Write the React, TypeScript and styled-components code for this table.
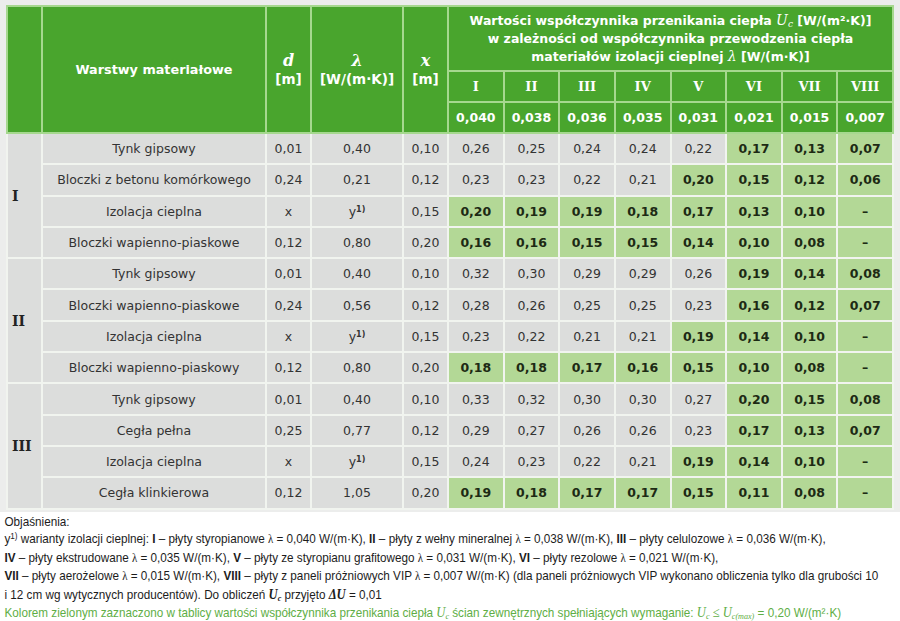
import styled, { createGlobalStyle } from "styled-components";

const GlobalStyle = createGlobalStyle`
  body {
    margin: 0;
    background: #ffffff;
    overflow: hidden;
  }
`;

type Row = {
  name: string;
  d: string;
  lambda: string;
  x: string;
  values: string[];
  greenFrom: number;
};

type Group = { label: string; rows: Row[] };

const ROMAN = ["I", "II", "III", "IV", "V", "VI", "VII", "VIII"];
const LAMBDAS = ["0,040", "0,038", "0,036", "0,035", "0,031", "0,021", "0,015", "0,007"];

const GROUPS: Group[] = [
  {
    label: "I",
    rows: [
      { name: "Tynk gipsowy", d: "0,01", lambda: "0,40", x: "0,10", values: ["0,26", "0,25", "0,24", "0,24", "0,22", "0,17", "0,13", "0,07"], greenFrom: 5 },
      { name: "Bloczki z betonu komórkowego", d: "0,24", lambda: "0,21", x: "0,12", values: ["0,23", "0,23", "0,22", "0,21", "0,20", "0,15", "0,12", "0,06"], greenFrom: 4 },
      { name: "Izolacja cieplna", d: "x", lambda: "y", x: "0,15", values: ["0,20", "0,19", "0,19", "0,18", "0,17", "0,13", "0,10", "–"], greenFrom: 0 },
      { name: "Bloczki wapienno-piaskowe", d: "0,12", lambda: "0,80", x: "0,20", values: ["0,16", "0,16", "0,15", "0,15", "0,14", "0,10", "0,08", "–"], greenFrom: 0 },
    ],
  },
  {
    label: "II",
    rows: [
      { name: "Tynk gipsowy", d: "0,01", lambda: "0,40", x: "0,10", values: ["0,32", "0,30", "0,29", "0,29", "0,26", "0,19", "0,14", "0,08"], greenFrom: 5 },
      { name: "Bloczki wapienno-piaskowe", d: "0,24", lambda: "0,56", x: "0,12", values: ["0,28", "0,26", "0,25", "0,25", "0,23", "0,16", "0,12", "0,07"], greenFrom: 5 },
      { name: "Izolacja cieplna", d: "x", lambda: "y", x: "0,15", values: ["0,23", "0,22", "0,21", "0,21", "0,19", "0,14", "0,10", "–"], greenFrom: 4 },
      { name: "Bloczki wapienno-piaskowy", d: "0,12", lambda: "0,80", x: "0,20", values: ["0,18", "0,18", "0,17", "0,16", "0,15", "0,10", "0,08", "–"], greenFrom: 0 },
    ],
  },
  {
    label: "III",
    rows: [
      { name: "Tynk gipsowy", d: "0,01", lambda: "0,40", x: "0,10", values: ["0,33", "0,32", "0,30", "0,30", "0,27", "0,20", "0,15", "0,08"], greenFrom: 5 },
      { name: "Cegła pełna", d: "0,25", lambda: "0,77", x: "0,12", values: ["0,29", "0,27", "0,26", "0,26", "0,23", "0,17", "0,13", "0,07"], greenFrom: 5 },
      { name: "Izolacja cieplna", d: "x", lambda: "y", x: "0,15", values: ["0,24", "0,23", "0,22", "0,21", "0,19", "0,14", "0,10", "–"], greenFrom: 4 },
      { name: "Cegła klinkierowa", d: "0,12", lambda: "1,05", x: "0,20", values: ["0,19", "0,18", "0,17", "0,17", "0,15", "0,11", "0,08", "–"], greenFrom: 0 },
    ],
  },
];

const App = () => {
  return (
    <>
      <GlobalStyle />
      <TableWrap>
        <Table>
          <colgroup>
            <col style={{ width: 35 }} />
            <col style={{ width: 224 }} />
            <col style={{ width: 45 }} />
            <col style={{ width: 92 }} />
            <col style={{ width: 45 }} />
            {ROMAN.map((r) => (
              <col key={r} />
            ))}
          </colgroup>
          <thead>
            <TitleRow>
              <HeadCell rowSpan={3} />
              <HeadCell rowSpan={3} $size={12.8}>
                Warstwy materiałowe
              </HeadCell>
              <HeadCell rowSpan={3} $size={13.5}>
                <Symbol>d</Symbol>
                <br />[m]
              </HeadCell>
              <HeadCell rowSpan={3} $size={13.5}>
                <Symbol>λ</Symbol>
                <br />[W/(m·K)]
              </HeadCell>
              <HeadCell rowSpan={3} $size={13.5}>
                <Symbol>x</Symbol>
                <br />[m]
              </HeadCell>
              <HeadCell colSpan={8}>
                Wartości współczynnika przenikania ciepła <InlineSym>U<sub>c</sub></InlineSym> [W/(m²·K)]
                <br />w zależności od współczynnika przewodzenia ciepła
                <br />materiałów izolacji cieplnej <InlineSym>λ</InlineSym> [W/(m·K)]
              </HeadCell>
            </TitleRow>
            <SubRow>
              {ROMAN.map((r) => (
                <RomanCell key={r}>{r}</RomanCell>
              ))}
            </SubRow>
            <SubRow>
              {LAMBDAS.map((l) => (
                <HeadCell key={l}>{l}</HeadCell>
              ))}
            </SubRow>
          </thead>
          <tbody>
            {GROUPS.map((g) =>
              g.rows.map((row, i) => (
                <BodyRow key={g.label + i}>
                  {i === 0 && <GroupCell rowSpan={4}>{g.label}</GroupCell>}
                  <Cell>{row.name}</Cell>
                  <Cell>{row.d}</Cell>
                  <Cell>
                    {row.lambda === "y" ? (
                      <>
                        y<Sup>1)</Sup>
                      </>
                    ) : (
                      row.lambda
                    )}
                  </Cell>
                  <Cell>{row.x}</Cell>
                  {row.values.map((v, j) => (
                    <Cell key={j} $green={j >= row.greenFrom}>
                      {v}
                    </Cell>
                  ))}
                </BodyRow>
              ))
            )}
          </tbody>
        </Table>
      </TableWrap>
      <Notes>
        <NoteLine>Objaśnienia:</NoteLine>
        <NoteLine>
          y<sup>1)</sup> warianty izolacji cieplnej: <b>I</b> – płyty styropianowe <Greek>λ</Greek> = 0,040 W/(m·K), <b>II</b> – płyty z wełny mineralnej <Greek>λ</Greek> = 0,038 W/(m·K), <b>III</b> – płyty celulozowe <Greek>λ</Greek> = 0,036 W/(m·K),
        </NoteLine>
        <NoteLine>
          <b>IV</b> – płyty ekstrudowane <Greek>λ</Greek> = 0,035 W/(m·K), <b>V</b> – płyty ze styropianu grafitowego <Greek>λ</Greek> = 0,031 W/(m·K), <b>VI</b> – płyty rezolowe <Greek>λ</Greek> = 0,021 W/(m·K),
        </NoteLine>
        <NoteLine>
          <b>VII</b> – płyty aerożelowe <Greek>λ</Greek> = 0,015 W/(m·K), <b>VIII</b> – płyty z paneli próżniowych VIP <Greek>λ</Greek> = 0,007 W/(m·K) (dla paneli próżniowych VIP wykonano obliczenia tylko dla grubości 10
        </NoteLine>
        <NoteLine>
          i 12 cm wg wytycznych producentów). Do obliczeń <MathSym>U<sub>c</sub></MathSym> przyjęto <MathSym>ΔU</MathSym> = 0,01
        </NoteLine>
        <GreenLine>
          Kolorem zielonym zaznaczono w tablicy wartości współczynnika przenikania ciepła <Italic>U<sub>c</sub></Italic> ścian zewnętrznych spełniających wymaganie: <Italic>U<sub>c</sub> ≤ U<sub>c(max)</sub></Italic> = 0,20 W/(m²·K)
        </GreenLine>
      </Notes>
    </>
  );
};

export default App;

const TableWrap = styled.div`
  background: #ecedec;
  padding: 5px 6px 2px 6px;
`;

const Table = styled.table`
  width: 888px;
  table-layout: fixed;
  border-collapse: collapse;
  font-family: "DejaVu Sans", Verdana, sans-serif;
  font-size: 12.5px;
`;

const TitleRow = styled.tr`
  height: 65px;
`;

const SubRow = styled.tr`
  height: 31px;
`;

const HeadCell = styled.th<{ $size?: number }>`
  background: #49a52d;
  color: #ffffff;
  font-size: ${(p) => p.$size ?? 12.5}px;
  font-weight: bold;
  text-align: center;
  vertical-align: middle;
  border: 2px solid #a6d88f;
  line-height: 18px;
  padding: 0;
`;

const RomanCell = styled(HeadCell)`
  font-family: "DejaVu Serif", Georgia, serif;
  font-size: 13px;
`;

const Symbol = styled.span`
  font-family: "DejaVu Serif", Georgia, serif;
  font-style: italic;
  font-size: 16px;
`;

const InlineSym = styled.span`
  font-family: "DejaVu Serif", Georgia, serif;
  font-style: italic;
  font-weight: normal;
  font-size: 14px;
  line-height: 1;

  sub {
    font-size: 9px;
    vertical-align: -2px;
    line-height: 0;
  }
`;

const BodyRow = styled.tr`
  height: 31.3px;
`;

const Cell = styled.td<{ $green?: boolean }>`
  background: ${(p) => (p.$green ? "#b3d896" : "#dcdddc")};
  color: ${(p) => (p.$green ? "#1d2a14" : "#333333")};
  font-weight: ${(p) => (p.$green ? "bold" : "normal")};
  text-align: center;
  vertical-align: middle;
  border: 2px solid #f1f4ef;
  padding: 0;
  white-space: nowrap;
`;

const GroupCell = styled.td`
  background: #dcdddc;
  color: #222222;
  font-family: "DejaVu Serif", Georgia, serif;
  font-weight: bold;
  font-size: 14px;
  text-align: left;
  padding: 0 0 0 4px;
  border: 2px solid #f1f4ef;
`;

const Sup = styled.sup`
  font-size: 8px;
  font-weight: bold;
  vertical-align: 4px;
`;

const Notes = styled.div`
  padding: 1px 5px 0 5px;
  font-family: "Liberation Sans", Arial, sans-serif;
  font-size: 13px;
  line-height: 17.6px;
  color: #1c1c1c;
  white-space: nowrap;
  transform: scaleX(0.9);
  transform-origin: left top;

  sup {
    font-size: 9px;
    vertical-align: 4px;
    line-height: 0;
  }
`;

const NoteLine = styled.div``;

const GreenLine = styled.div`
  color: #5eae45;
`;

const Greek = styled.span`
  font-family: "Liberation Serif", "DejaVu Serif", serif;
  font-size: 12px;
`;

const MathSym = styled.span`
  font-family: "Liberation Serif", "DejaVu Serif", serif;
  font-style: italic;
  font-weight: bold;
  font-size: 14px;
  line-height: 1;

  sub {
    font-size: 9px;
    vertical-align: -2px;
    line-height: 0;
  }
`;

const Italic = styled.span`
  font-family: "Liberation Serif", "DejaVu Serif", serif;
  font-style: italic;
  font-size: 14px;
  line-height: 1;

  sub {
    font-size: 9px;
    vertical-align: -2px;
    line-height: 0;
  }
`;
